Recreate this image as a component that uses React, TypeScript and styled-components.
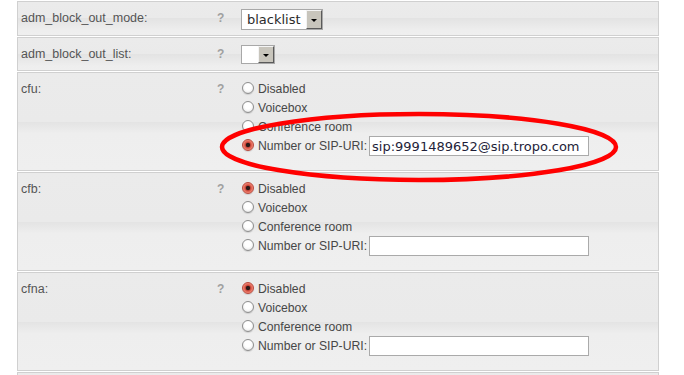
import styled, { createGlobalStyle } from 'styled-components';

const GlobalStyle = createGlobalStyle`
  html, body {
    margin: 0;
    padding: 0;
    background: #fff;
    overflow: hidden;
  }
  body {
    font-family: "Liberation Sans", Arial, sans-serif;
  }
`;

const Page = styled.div`
  position: relative;
  width: 642px;
  height: 375px;
  overflow: hidden;
  padding: 1px 0 0 17px;
  display: flex;
  flex-direction: column;
  gap: 1px;
`;

const Row = styled.div<{ $height: number }>`
  display: grid;
  grid-template-columns: 196px 24px 1fr;
  align-items: start;
  box-sizing: border-box;
  height: ${props => props.$height}px;
  flex-shrink: 0;
  padding: 7px 0 0 3px;
  border: 1px solid #d0d0d0;
  background: linear-gradient(
    to bottom,
    #ebebeb 0%,
    #eaeaea 50%,
    #e3e3e3 50%,
    #eeeeee calc(50% + 12px),
    #efefef 100%
  );
`;

const Label = styled.div`
  font-size: 12.5px;
  line-height: 19px;
  color: #555;
`;

const Help = styled.div`
  font-size: 12px;
  font-weight: bold;
  line-height: 19px;
  color: #a0a0a0;
`;

const SelectBox = styled.div<{ $height: number }>`
  display: inline-flex;
  align-items: stretch;
  box-sizing: border-box;
  height: ${props => props.$height}px;
  border: 1px solid #a8a8a8;
  background: #fff;
`;

const SelectValue = styled.span<{ $empty?: boolean }>`
  min-width: ${props => (props.$empty ? '16px' : '0')};
  padding: ${props => (props.$empty ? '0' : '0 5px 0 5px')};
  font-family: "DejaVu Sans", sans-serif;
  font-size: 13px;
  line-height: 19px;
  color: #2b2b2b;
`;

const SelectArrow = styled.span`
  box-sizing: border-box;
  width: 16px;
  display: flex;
  align-items: center;
  justify-content: center;
  background: #c8c5bc;
  border-top: 1px solid #f4f4f4;
  border-left: 1px solid #f4f4f4;
  border-right: 1px solid #5a5a5a;
  border-bottom: 1px solid #5a5a5a;

  &::after {
    content: '';
    margin-top: 2px;
    border-left: 3px solid transparent;
    border-right: 3px solid transparent;
    border-top: 3px solid #000;
  }
`;

const Choices = styled.div`
  display: flex;
  flex-direction: column;
`;

const Choice = styled.label`
  display: flex;
  align-items: flex-start;
  height: 19px;
  font-size: 12.2px;
  line-height: 19px;
  color: #474747;
`;

const Radio = styled.span<{ $checked?: boolean }>`
  box-sizing: border-box;
  width: 12px;
  height: 12px;
  margin: 2px 4px 0 1px;
  border-radius: 50%;
  border: 1px solid ${props => (props.$checked ? '#b8483c' : '#8e8e8e')};
  background: ${props =>
    props.$checked
      ? 'radial-gradient(circle at 50% 50%, #2a1a18 0 1.8px, #c9463a 2.6px, #e8705f 4px, #f5a596 6px)'
      : 'radial-gradient(circle at 50% 40%, #ffffff 0 3px, #f3f3f3 5px, #dcdcdc 6px)'};
  box-shadow: 0 1px 1px rgba(0, 0, 0, 0.12);
`;

const UriInput = styled.input`
  box-sizing: border-box;
  width: 220px;
  height: 20px;
  margin: -1px 0 0 2px;
  padding: 0 2px;
  border: 1px solid #aaaaaa;
  background: #fff;
  font-family: "DejaVu Sans", sans-serif;
  font-size: 13px;
  color: #1e1e38;
  outline: none;
`;

const Annotation = styled.svg`
  position: absolute;
  left: 0;
  top: 0;
  width: 684px;
  height: 375px;
  pointer-events: none;
`;

const options = ['Disabled', 'Voicebox', 'Conference room', 'Number or SIP-URI:'];

interface ForwardFieldProps {
  name: string;
  selected: number;
  uri?: string;
}

const ForwardField = ({ name, selected, uri = '' }: ForwardFieldProps) => (
  <Row $height={99}>
    <Label>{name}:</Label>
    <Help>?</Help>
    <Choices>
      {options.map((opt, i) => (
        <Choice key={opt}>
          <Radio $checked={i === selected} />
          {opt}
          {i === options.length - 1 && <UriInput defaultValue={uri} />}
        </Choice>
      ))}
    </Choices>
  </Row>
);

const App = () => {
  return (
    <>
      <GlobalStyle />
      <Page>
        <Row $height={35}>
          <Label>adm_block_out_mode:</Label>
          <Help>?</Help>
          <div>
            <SelectBox $height={21}>
              <SelectValue>blacklist</SelectValue>
              <SelectArrow />
            </SelectBox>
          </div>
        </Row>
        <Row $height={34}>
          <Label>adm_block_out_list:</Label>
          <Help>?</Help>
          <div>
            <SelectBox $height={19}>
              <SelectValue $empty />
              <SelectArrow />
            </SelectBox>
          </div>
        </Row>
        <ForwardField name="cfu" selected={3} uri="sip:9991489652@sip.tropo.com" />
        <ForwardField name="cfb" selected={0} />
        <ForwardField name="cfna" selected={0} />
        {/* next row only peeks in at the bottom edge */}
        <Row $height={99} />

        <Annotation viewBox="0 0 684 375">
          <ellipse cx="419" cy="147" rx="197" ry="33" fill="none" stroke="#ff0000" strokeWidth="4.5" />
        </Annotation>
      </Page>
    </>
  );
};

export default App;
